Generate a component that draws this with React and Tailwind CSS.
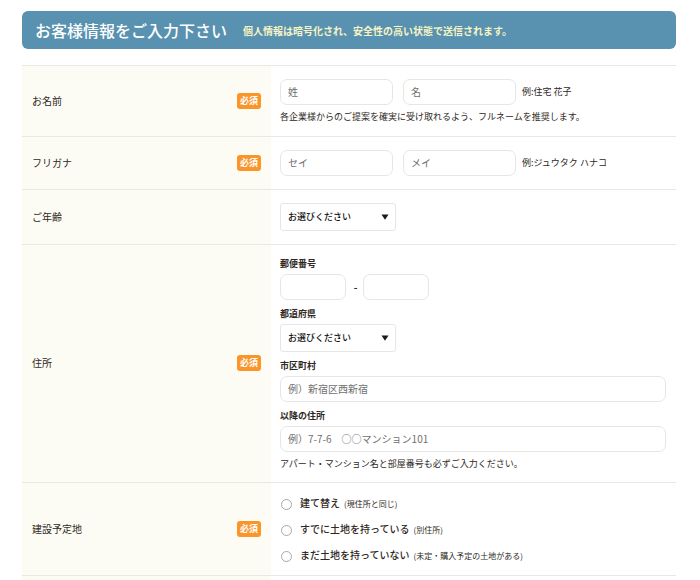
import React from "react";

function Row({ label, htmlFor, required, children, pad = "py-[13px]" }) {
  return (
    <div className="flex border-t border-[#e9e8e2]">
      <div className="flex w-[249px] shrink-0 items-center justify-between bg-[#fdfcf4] px-[10px] pb-px">
        {htmlFor ? <label htmlFor={htmlFor}>{label}</label> : <span>{label}</span>}
        {required && (
          <span className="rounded-[3px] bg-[#f99529] px-[3px] pb-px text-[9px] leading-[15px] font-bold text-white">
            必須
          </span>
        )}
      </div>
      <div className={`min-w-0 flex-1 pr-[10px] pl-[9px] ${pad}`}>{children}</div>
    </div>
  );
}

function TextBox({ className, ...props }) {
  return (
    <input
      type="text"
      className={`h-[26px] rounded-[7px] border border-[#e6e6e6] bg-white px-[7px] pb-[2px] text-[10px] text-[#333] placeholder:text-[#6f6f6f] ${className}`}
      {...props}
    />
  );
}

function SelectBox({ id, ...props }) {
  return (
    <div className="relative h-[28px] w-[116px]">
      <select
        id={id}
        className="h-full w-full appearance-none rounded-[3px] border border-[#e6e6e6] bg-white px-[7px] pb-px text-[9px] font-medium text-[#111]"
        {...props}
      >
        <option>お選びください</option>
      </select>
      <svg
        className="pointer-events-none absolute top-[11px] right-[7px]"
        width="8"
        height="6"
        viewBox="0 0 8 6"
        aria-hidden="true"
      >
        <path d="M0.5 0.5H7.5L4 5.8Z" fill="#1a1a1a" />
      </svg>
    </div>
  );
}

function FieldLabel({ htmlFor, children }) {
  return (
    <label htmlFor={htmlFor} className="block pt-[3px] text-[9px] leading-[21px] font-bold">
      {children}
    </label>
  );
}

function Choice({ text, note, value }) {
  return (
    <label className="flex h-[26px] items-center">
      <input
        type="radio"
        name="site"
        value={value}
        className="mt-[3px] mr-2 ml-px size-[11px] shrink-0 appearance-none rounded-full border border-[#a8a8a8] bg-white checked:border-[3px]"
      />
      <span className="font-medium">{text}</span>
      <span className="ml-1 pt-px text-[8px]">{note}</span>
    </label>
  );
}

export default function App() {
  return (
    <main className="bg-white pt-[11px] pr-[24px] pl-[22px] font-['Noto_Sans_CJK_JP','Noto_Sans',sans-serif] text-[10px] leading-[14px] text-[#2e2824]">
      <header className="flex h-[38px] items-center gap-4 rounded-[6px] bg-[#5991b0] px-[13px] pb-px">
        <h1 className="text-[16px] leading-[24px] font-medium text-white">お客様情報をご入力下さい</h1>
        <p className="pt-[2px] font-bold text-[#f6f3c4]">
          個人情報は暗号化され、安全性の高い状態で送信されます。
        </p>
      </header>

      <form className="mt-4">
        <Row label="お名前" htmlFor="sei" required>
          <div className="flex items-center gap-[10px]">
            <TextBox id="sei" placeholder="姓" className="w-[113px]" />
            <TextBox aria-label="名" placeholder="名" className="w-[113px]" />
            <span className="-ml-1 text-[9px]">例:住宅 花子</span>
          </div>
          <p className="mt-[5px] text-[9px] leading-[13px]">
            各企業様からのご提案を確実に受け取れるよう、フルネームを推奨します。
          </p>
        </Row>

        <Row label="フリガナ" htmlFor="sei-kana" required>
          <div className="flex items-center gap-[10px]">
            <TextBox id="sei-kana" placeholder="セイ" className="w-[113px]" />
            <TextBox aria-label="メイ" placeholder="メイ" className="w-[113px]" />
            <span className="-ml-1 text-[9px]">例:ジュウタク ハナコ</span>
          </div>
        </Row>

        <Row label="ご年齢" htmlFor="age">
          <SelectBox id="age" />
        </Row>

        <Row label="住所" required pad="pt-[5px] pb-[6px]">
          <FieldLabel htmlFor="zip1">郵便番号</FieldLabel>
          <div className="flex items-center">
            <TextBox id="zip1" className="w-[66px]" />
            <span className="w-[17px] pl-[2px] text-center font-bold">-</span>
            <TextBox aria-label="郵便番号" className="w-[66px]" />
          </div>
          <FieldLabel htmlFor="pref">都道府県</FieldLabel>
          <SelectBox id="pref" />
          <FieldLabel htmlFor="city">市区町村</FieldLabel>
          <TextBox id="city" placeholder="例）新宿区西新宿" className="block w-full" />
          <FieldLabel htmlFor="street">以降の住所</FieldLabel>
          <TextBox id="street" placeholder="例）7-7-6　○○マンション101" className="block w-full" />
          <p className="text-[9px] leading-[24px]">
            アパート・マンション名と部屋番号も必ずご入力ください。
          </p>
        </Row>

        <Row label="建設予定地" required pad="py-[7px]">
          <Choice value="rebuild" text="建て替え" note="(現住所と同じ)" />
          <Choice value="owned" text="すでに土地を持っている" note="(別住所)" />
          <Choice value="none" text="まだ土地を持っていない" note="(未定・購入予定の土地がある)" />
        </Row>

        <Row label="" pad="py-[2px]" />
      </form>
    </main>
  );
}
